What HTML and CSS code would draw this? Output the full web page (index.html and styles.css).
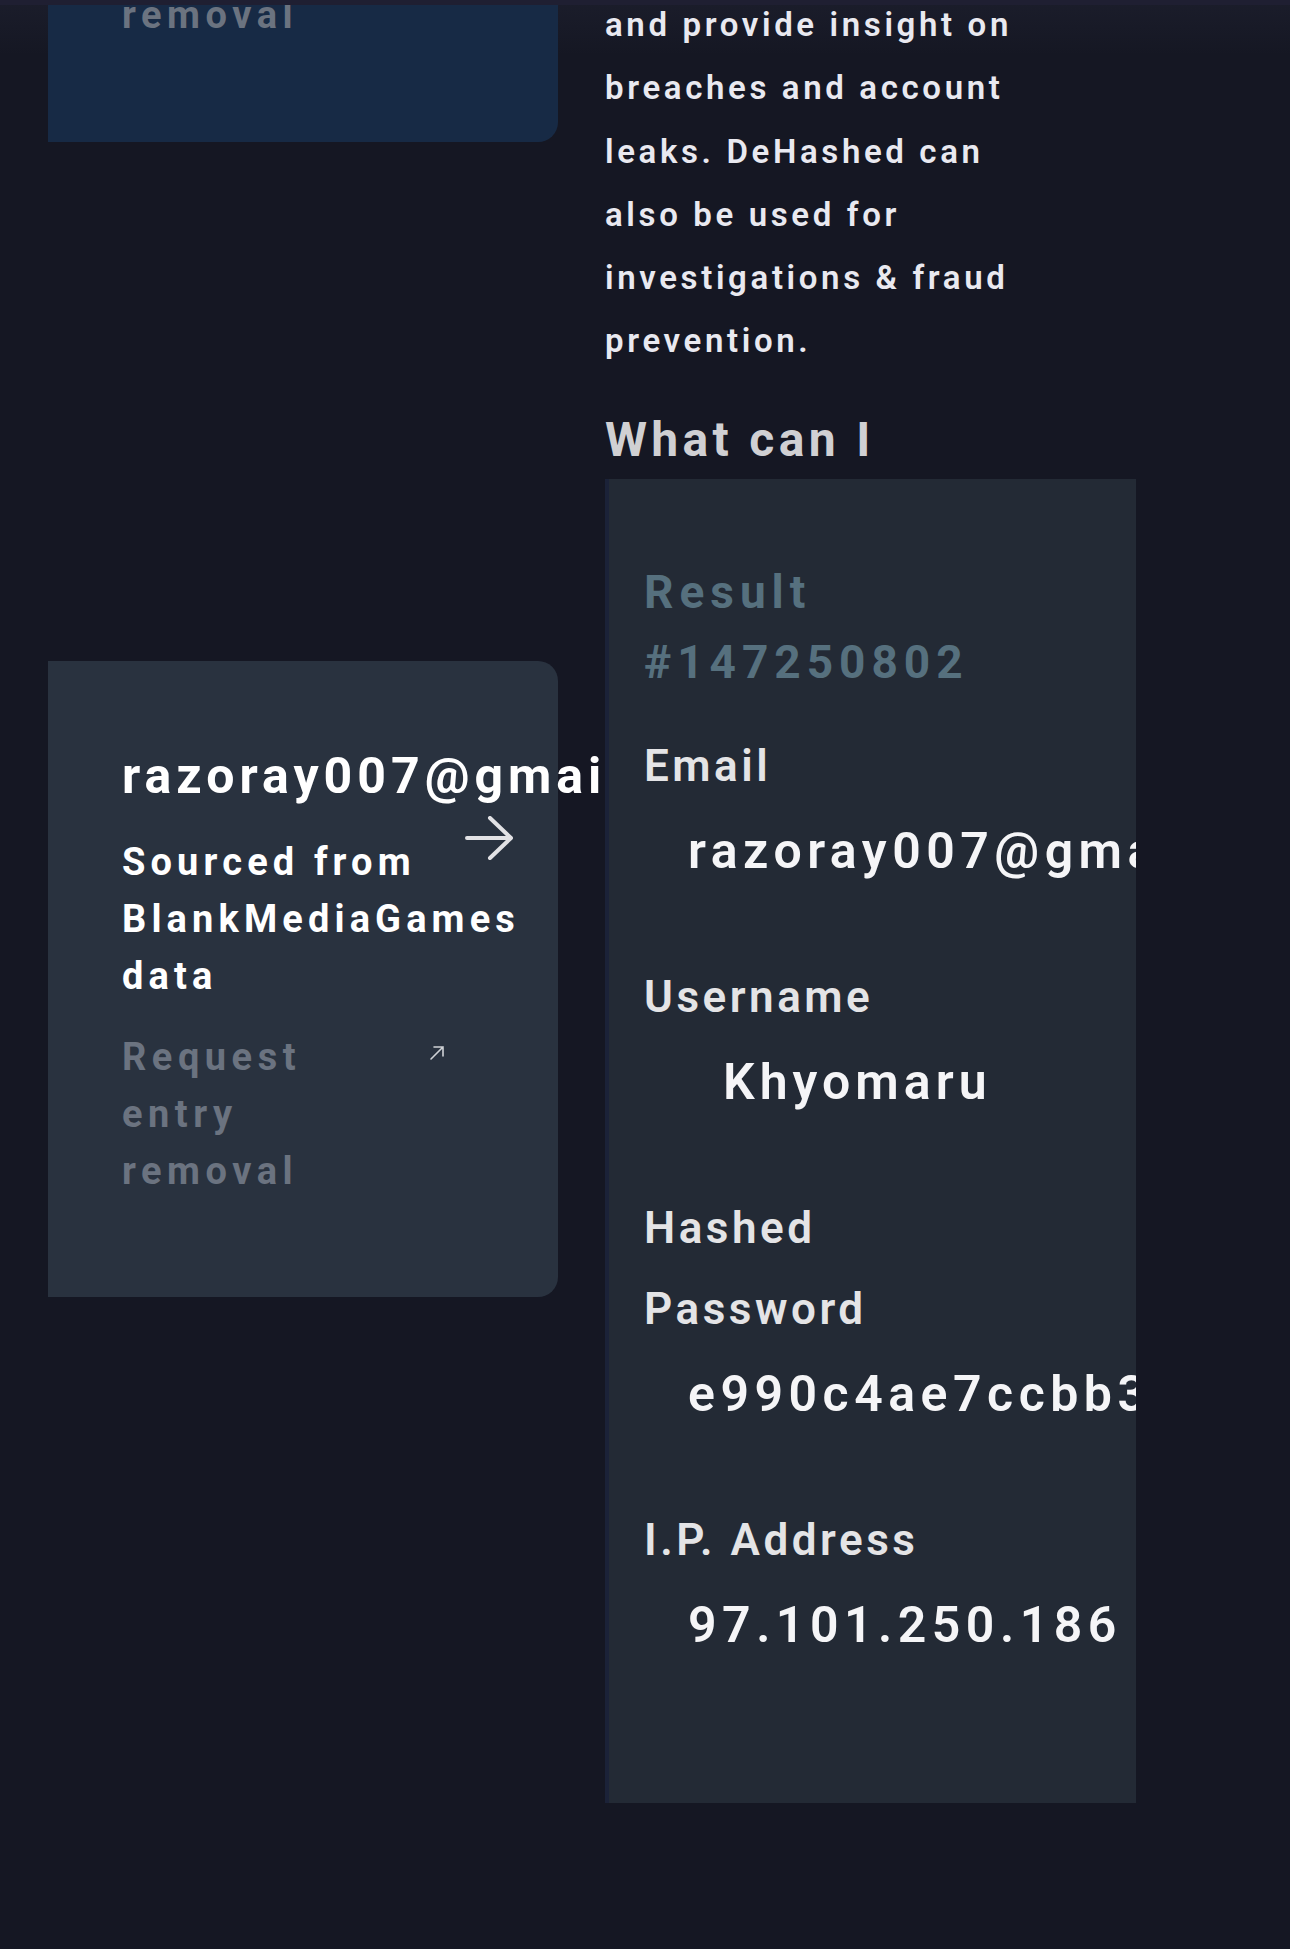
FILE: index.html
```html
<!doctype html>
<html lang="en">
<head>
    <meta charset="UTF-8">
    <meta name="viewport" content="width=device-width, initial-scale=1.0">
    <title>DeHashed</title>
    <link rel="stylesheet" href="styles.css">
</head>
<body>
    <!--顶部导航条的底边-->
    <header class="topbar"></header>

    <div class="page">
        <!--左边: 泄露记录列表-->
        <div class="entries">
            <div class="entry entry-active">
                <a class="remove" href="#">
                    <span class="remove-text">Request entry removal</span>
                    <svg class="remove-icon" viewBox="0 0 16 16"><path d="M2 14 L14 2 M5 2 H14 V11"/></svg>
                </a>
            </div>
            <div class="entry">
                <div class="entry-email">razoray007@gmail.com</div>
                <div class="entry-source">Sourced from BlankMediaGames data</div>
                <svg class="entry-arrow" viewBox="0 0 48 44"><path d="M2 22 H46 M25 2 L46 22 L25 42"/></svg>
                <a class="remove" href="#">
                    <span class="remove-text">Request entry removal</span>
                    <svg class="remove-icon" viewBox="0 0 16 16"><path d="M2 14 L14 2 M5 2 H14 V11"/></svg>
                </a>
            </div>
        </div>

        <!--右边: 介绍文字 + 结果卡片-->
        <div class="about">
            <p class="about-text">and provide insight on breaches and account leaks. DeHashed can also be used for investigations &amp; fraud prevention.</p>
            <h2 class="about-title">What can I search for?</h2>

            <!--结果详情卡片(盖在标题下半部分上面)-->
            <div class="result">
                <h3 class="result-title">Result #147250802</h3>
                <div class="fields">
                    <div class="field">
                        <div class="field-label">Email</div>
                        <div class="field-value">razoray007@gmail.com</div>
                    </div>
                    <div class="field">
                        <div class="field-label">Username</div>
                        <div class="field-value field-name">Khyomaru</div>
                    </div>
                    <div class="field">
                        <div class="field-label">Hashed Password</div>
                        <div class="field-value">e990c4ae7ccbb3f1a2</div>
                    </div>
                    <div class="field">
                        <div class="field-label">I.P. Address</div>
                        <div class="field-value">97.101.250.186</div>
                    </div>
                </div>
            </div>
        </div>
    </div>
</body>
</html>
```

FILE: styles.css
```css
html{
    /*顶部有一点点亮的渐变*/
    background: #151723 linear-gradient(#1b1d2b, #151723) no-repeat;
    background-size: 100% 55px;
}
body{
    margin: 0;
    min-height: 1949px;
    font-family: Roboto, "Noto Sans", sans-serif;
    font-weight: 600;
    color: #e9e9f0;
    letter-spacing: .1em;
}
a{
    color: inherit;
    text-decoration: none;
}

/*顶部导航条*/
.topbar{
    position: fixed;
    top: 0;
    left: 0;
    right: 0;
    height: 5px;
    background: #1f1f32;
    z-index: 5;
}

/*整体两栏*/
.page{
    display: flex;
    align-items: flex-start;
    gap: 47px;
    padding-left: 48px;
}

/*左栏*/
.entries{
    flex: none;
    width: 510px;
    display: flex;
    flex-direction: column;
    gap: 519px;
}
.entry{
    position: relative;
    background: #29323f;
    border-radius: 0 20px 20px 0;
    padding: 85px 30px 97px 74px;
}
/*上一条记录, 只露出底部*/
.entry-active{
    background: linear-gradient(#131b2e 0, #172a45 45px);
    margin-top: -127px;
    padding: 0 30px 98px 74px;
}
.entry-email{
    font-size: 50px;
    line-height: 60px;
    font-weight: 700;
    color: #fff;
    white-space: nowrap;
    letter-spacing: .1em;
}
.entry-source{
    margin-top: 28px;
    font-size: 38px;
    line-height: 57px;
    font-weight: 700;
    color: #fff;
    letter-spacing: .135em;
}
.entry-arrow{
    position: absolute;
    top: 155px;
    left: 417px;
    width: 48px;
    height: 44px;
    fill: none;
    stroke: #e2e2e5;
    stroke-width: 4;
    stroke-linecap: round;
    stroke-linejoin: round;
}
.remove{
    display: flex;
    align-items: flex-start;
    gap: 57px;
    margin-top: 24px;
}
.entry-active .remove{
    margin-top: 0;
}
.remove-text{
    width: 250px;
    font-size: 38px;
    line-height: 57px;
    font-weight: 700;
    color: #6b7380;
    letter-spacing: .145em;
}
.remove-icon{
    flex: none;
    width: 16px;
    height: 16px;
    margin-top: 16px;
    fill: none;
    stroke: #cfd2d6;
    stroke-width: 1.6;
    stroke-linecap: round;
}

/*右栏*/
.about{
    flex: none;
    width: 435px;
    margin-top: -7px;
}
.about-text{
    margin: 0;
    font-size: 33px;
    line-height: 63.3px;
    color: #e9e9f0;
    letter-spacing: .11em;
}
/*标题第二行被结果卡片盖住*/
.about-title{
    margin: 31.6px 0 0;
    font-size: 48px;
    line-height: 72px;
    font-weight: 700;
    color: #d0d0d3;
    letter-spacing: .09em;
}

/*结果卡片*/
.result{
    position: relative;
    z-index: 1;
    width: 531px;
    height: 1324px;
    margin-top: -69px;
    box-sizing: border-box;
    border-left: 4px solid #1b2238;
    background: #232a35;
    padding: 78px 30px 0 35px;
    overflow: hidden;
}
.result-title{
    margin: 0;
    font-size: 46px;
    line-height: 70px;
    font-weight: 700;
    color: #56707e;
    letter-spacing: .13em;
}
.fields{
    display: flex;
    flex-direction: column;
    gap: 76px;
    margin-top: 29px;
}
.field-label{
    width: 380px;
    font-size: 44px;
    line-height: 81px;
    color: #e4e4e6;
    letter-spacing: .08em;
}
.field-value{
    margin: 14px 0 0 44px;
    font-size: 50px;
    line-height: 60px;
    color: #f5f5f7;
    white-space: nowrap;
    letter-spacing: .11em;
}
.field-name{
    margin-left: 79px;
    letter-spacing: .1em;
}
```
